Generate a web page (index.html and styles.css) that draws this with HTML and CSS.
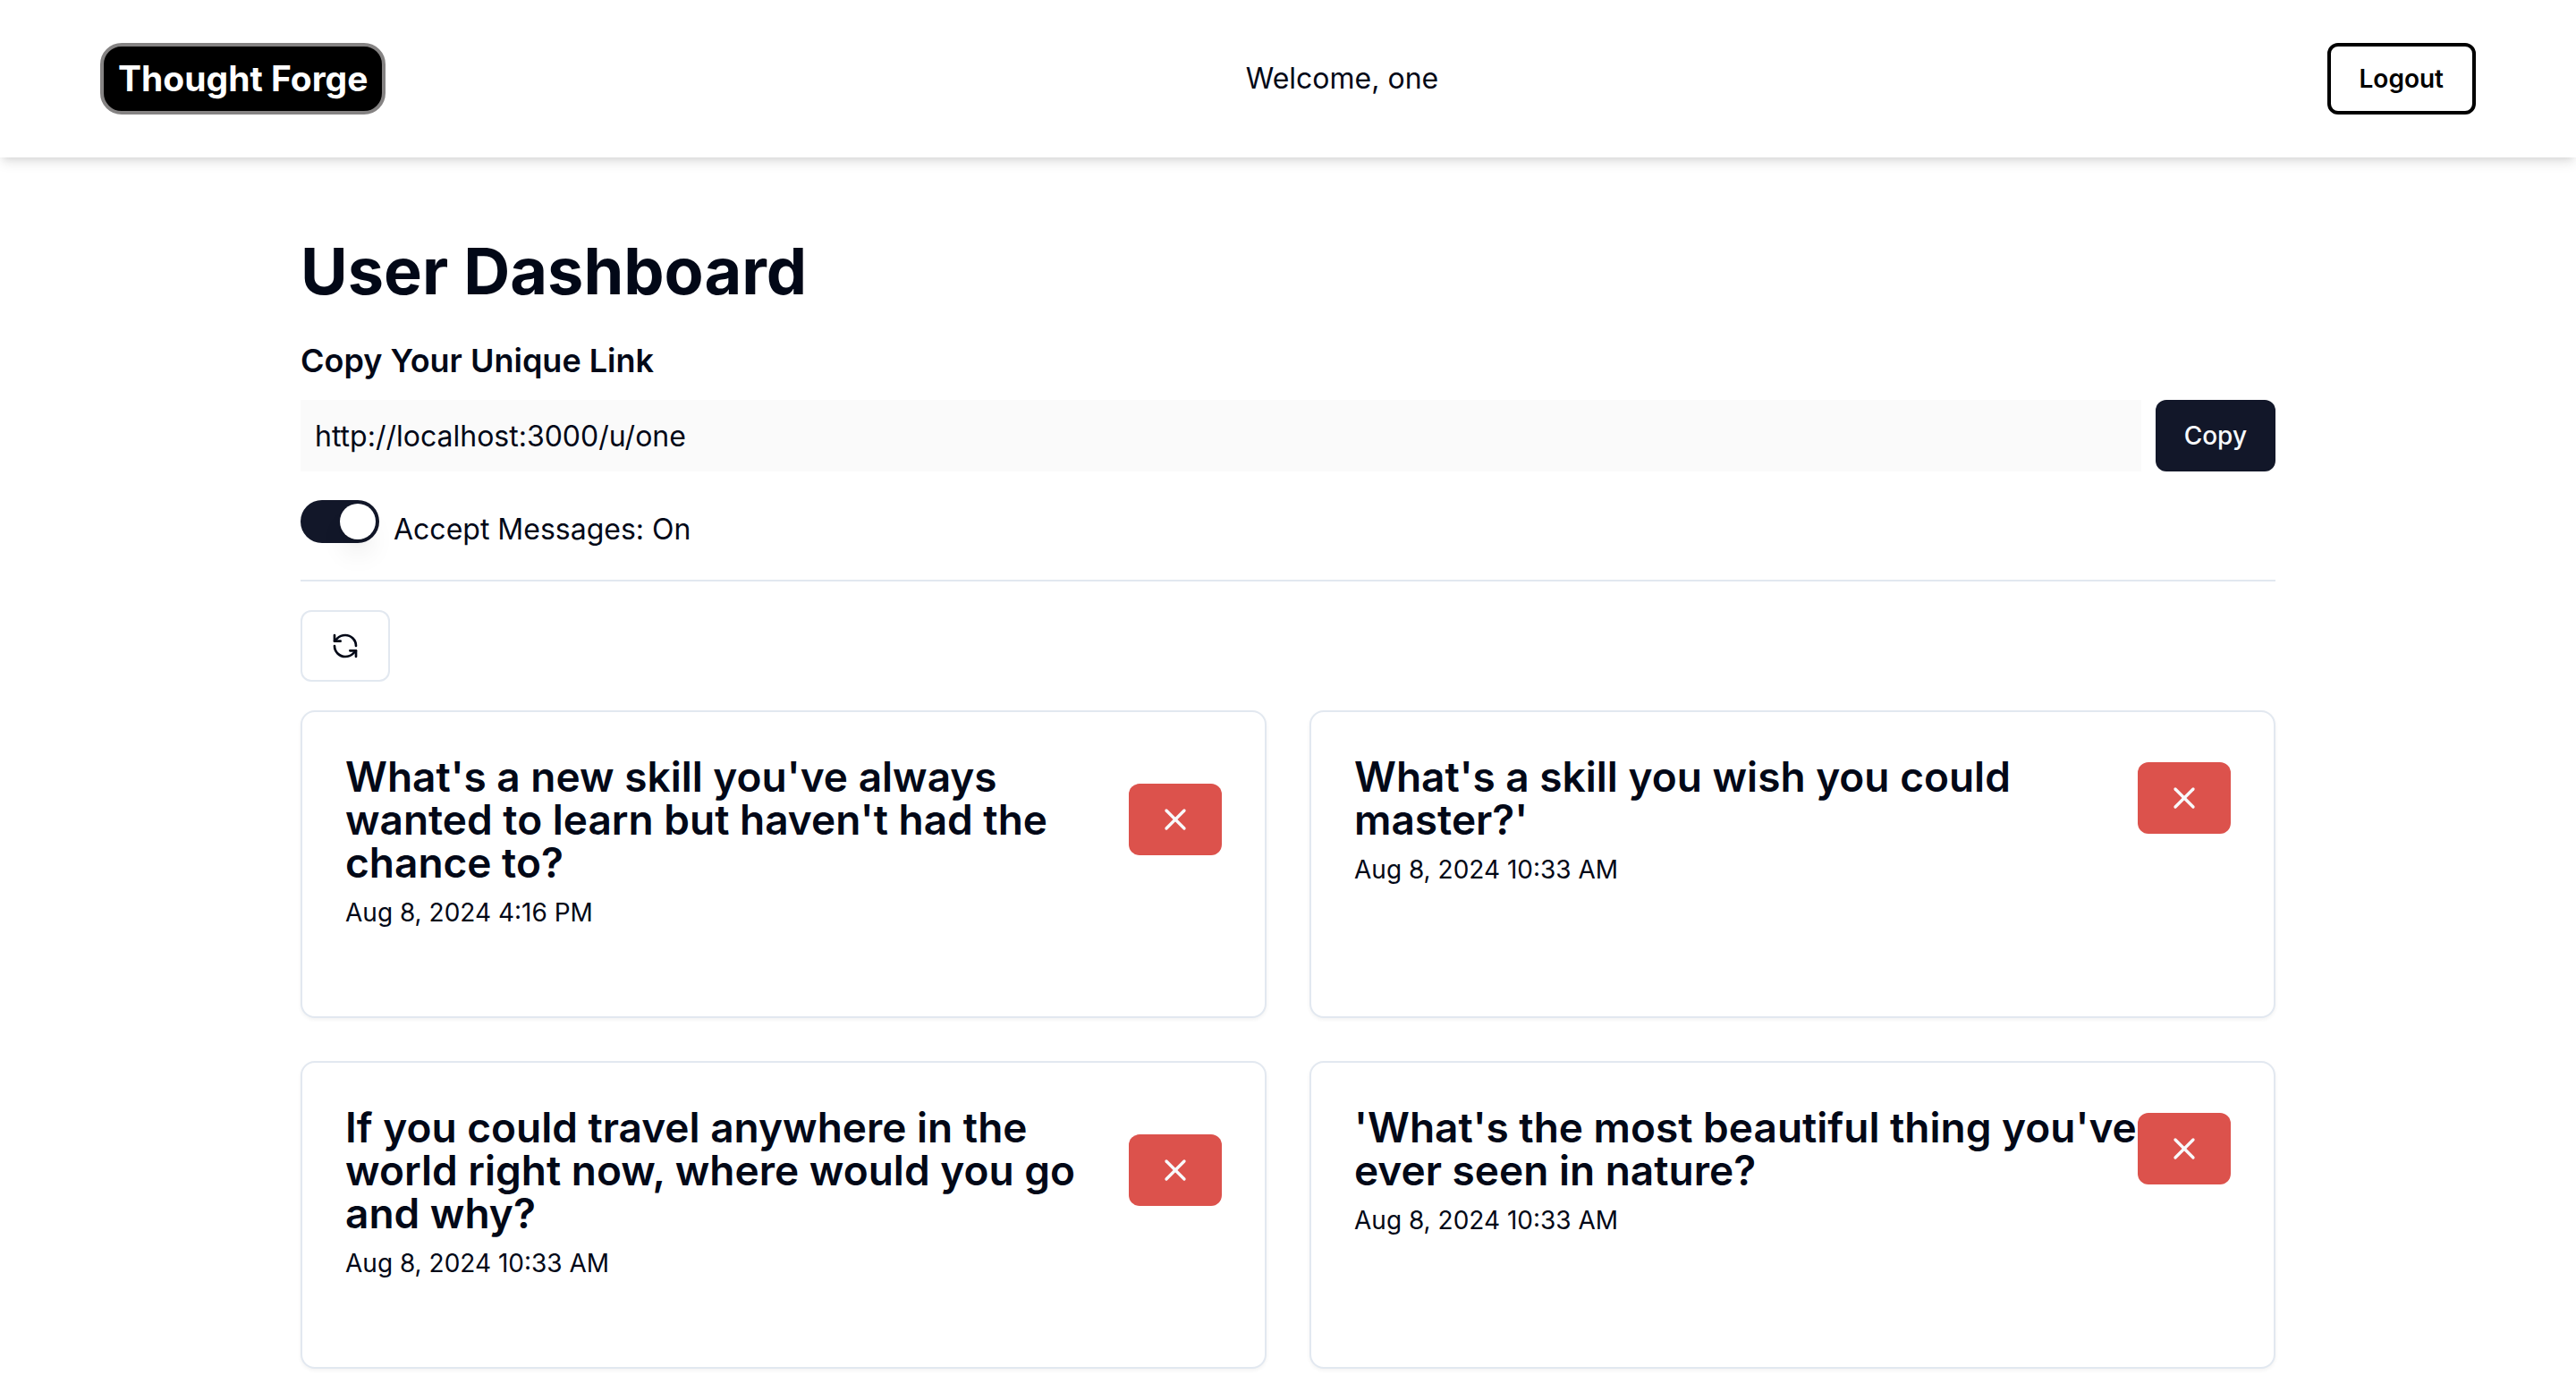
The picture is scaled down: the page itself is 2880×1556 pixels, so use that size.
FILE: index.html
```html
<!DOCTYPE html>
<html lang="en">
<head>
<meta charset="utf-8">
<meta name="viewport" content="width=device-width, initial-scale=1">
<title>Thought Forge</title>
<link rel="stylesheet" href="styles.css">
</head>
<body>
<svg class="sprite" aria-hidden="true">
  <symbol id="icon-x" viewBox="0 0 24 24"><path d="M18 6 6 18"/><path d="m6 6 12 12"/></symbol>
  <symbol id="icon-refresh" viewBox="0 0 24 24"><path d="M21 12a9 9 0 0 0-9-9 9.75 9.75 0 0 0-6.74 2.74L3 8"/><path d="M3 3v5h5"/><path d="M3 12a9 9 0 0 0 9 9 9.75 9.75 0 0 0 6.74-2.74L21 16"/><path d="M16 16h5v5"/></symbol>
</svg>
<header class="navbar">
  <a class="brand" href="#">Thought Forge</a>
  <span class="welcome">Welcome, one</span>
  <button class="btn btn-logout" type="button">Logout</button>
</header>
<main class="dashboard">
  <h1 class="page-title">User Dashboard</h1>
  <section class="link-section">
    <h2 class="section-title"><label for="profile-url">Copy Your Unique Link</label></h2>
    <div class="link-row">
      <input class="link-input" id="profile-url" type="text" value="http://localhost:3000/u/one" readonly>
      <button class="btn btn-primary" type="button">Copy</button>
    </div>
  </section>
  <div class="accept-row">
    <input class="switch" id="accept" type="checkbox" role="switch" checked>
    <label class="accept-label" for="accept">Accept Messages: On</label>
  </div>
  <hr class="separator">
  <button class="btn btn-outline" type="button" aria-label="Refresh messages"><svg class="icon"><use href="#icon-refresh"/></svg></button>
  <div class="messages">
    <article class="card">
      <div class="card-head">
        <h3 class="card-title">What's a new skill you've always wanted to learn but haven't had the chance to?</h3>
        <button class="btn btn-danger" type="button" aria-label="Delete message"><svg class="icon icon-lg"><use href="#icon-x"/></svg></button>
      </div>
      <time class="card-date">Aug 8, 2024 4:16 PM</time>
    </article>
    <article class="card">
      <div class="card-head">
        <h3 class="card-title">What's a skill you wish you could master?'</h3>
        <button class="btn btn-danger" type="button" aria-label="Delete message"><svg class="icon icon-lg"><use href="#icon-x"/></svg></button>
      </div>
      <time class="card-date">Aug 8, 2024 10:33 AM</time>
    </article>
    <article class="card">
      <div class="card-head">
        <h3 class="card-title">If you could travel anywhere in the world right now, where would you go and why?</h3>
        <button class="btn btn-danger" type="button" aria-label="Delete message"><svg class="icon icon-lg"><use href="#icon-x"/></svg></button>
      </div>
      <time class="card-date">Aug 8, 2024 10:33 AM</time>
    </article>
    <article class="card">
      <div class="card-head">
        <h3 class="card-title">'What's the most beautiful thing you've ever seen in nature?</h3>
        <button class="btn btn-danger" type="button" aria-label="Delete message"><svg class="icon icon-lg"><use href="#icon-x"/></svg></button>
      </div>
      <time class="card-date">Aug 8, 2024 10:33 AM</time>
    </article>
  </div>
</main>
</body>
</html>
```
FILE: styles.css
```css
*, *::before, *::after { box-sizing: border-box; }

body {
  margin: 0;
  background: #fff;
  color: #020817;
  font-family: Inter, "Liberation Sans", sans-serif;
  font-size: 32px;
  line-height: 48px;
}

h1, h2, h3 { margin: 0; }

.sprite { display: none; }

.icon {
  width: 32px;
  height: 32px;
  fill: none;
  stroke: currentColor;
  stroke-width: 2;
  stroke-linecap: round;
  stroke-linejoin: round;
}

.icon-lg { width: 40px; height: 40px; }

.navbar {
  display: flex;
  align-items: center;
  justify-content: space-between;
  padding: 48px 112px;
  background: #fff;
  box-shadow: 0 8px 12px -2px rgba(0, 0, 0, 0.1), 0 4px 8px -4px rgba(0, 0, 0, 0.1);
}

.brand {
  padding: 8px 16px;
  border: 4px solid #858383;
  border-radius: 24px;
  background: #000;
  color: #fff;
  font-size: 39px;
  font-weight: 700;
  line-height: 56px;
  text-decoration: none;
}

.welcome { margin-right: 32px; }

.btn {
  display: inline-flex;
  flex-shrink: 0;
  align-items: center;
  justify-content: center;
  height: 80px;
  padding: 0 32px;
  border: 0;
  border-radius: 12px;
  font: 500 28px/40px Inter, "Liberation Sans", sans-serif;
  cursor: pointer;
}

.btn-logout {
  border: 4px solid #000;
  background: #fff;
  color: #000;
  font-weight: 600;
}

.btn-primary { background: #121729; color: #f8fafc; }

.btn-outline {
  border: 2px solid #e2e8f0;
  background: #fff;
  color: #020817;
}

.btn-danger { background: #dc524c; color: #f8fafc; }

.dashboard {
  max-width: 2304px;
  margin: 0 auto;
  padding: 87px 48px 24px;
}

.page-title {
  margin-bottom: 32px;
  font-size: 72px;
  font-weight: 700;
  line-height: 80px;
}

.link-section { margin-bottom: 32px; }

.section-title {
  margin-bottom: 16px;
  font-size: 36px;
  font-weight: 600;
  line-height: 56px;
}

.link-row { display: flex; gap: 16px; }

.link-input {
  flex: 1;
  min-width: 0;
  height: 80px;
  padding: 0 16px;
  border: 0;
  background: #fafafa;
  color: inherit;
  font: inherit;
}

.accept-row {
  display: flex;
  gap: 16px;
  height: 57px;
}

.switch {
  display: flex;
  justify-content: flex-end;
  width: 88px;
  height: 48px;
  margin: 0;
  padding: 4px;
  border-radius: 24px;
  background: #121729;
  appearance: none;
}

.switch::before {
  content: "";
  width: 40px;
  height: 40px;
  border-radius: 50%;
  background: #fff;
  box-shadow: 0 20px 30px -6px rgba(0, 0, 0, 0.1), 0 8px 12px -8px rgba(0, 0, 0, 0.1);
}

.switch:not(:checked) { justify-content: flex-start; background: #e2e8f0; }

.accept-label { align-self: flex-end; }

.separator {
  height: 2px;
  margin: 32px 0;
  border: 0;
  background: #e2e8f0;
}

.messages {
  display: grid;
  grid-template-columns: repeat(2, 1fr);
  gap: 48px;
  margin-top: 32px;
}

.card {
  display: flex;
  flex-direction: column;
  gap: 12px;
  padding: 48px 48px 96px;
  border: 2px solid #e2e8f0;
  border-radius: 16px;
  background: #fff;
  box-shadow: 0 2px 4px rgba(0, 0, 0, 0.05);
}

.card-head {
  display: flex;
  align-items: center;
  justify-content: space-between;
}

.card-title {
  font-size: 46px;
  font-weight: 600;
  line-height: 48px;
}

.card-date { font-size: 28px; line-height: 40px; }
```
